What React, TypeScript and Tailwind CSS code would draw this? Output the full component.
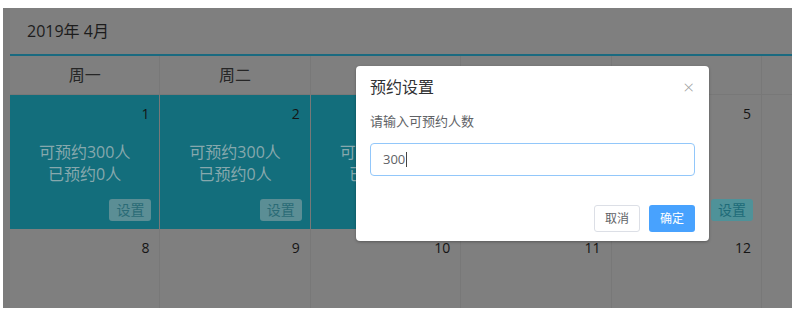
import React from "react";

const weekNames = ["周一", "周二", "周三", "周四", "周五", ""];

type Day = { n?: number; open?: boolean; btn?: "full" | "faint" };

const rows: Day[][] = [
  [
    { n: 1, open: true, btn: "full" },
    { n: 2, open: true, btn: "full" },
    { n: 3, open: true, btn: "full" },
    { n: 4, open: true, btn: "full" },
    { n: 5, btn: "faint" },
    {},
  ],
  [{ n: 8 }, { n: 9 }, { n: 10 }, { n: 11 }, { n: 12 }, {}],
];

const font = { fontFamily: '"Open Sans", "Noto Sans CJK SC", sans-serif' };

const DayCell: React.FC<{ day: Day; tall: boolean }> = ({ day, tall }) => {
  return (
    <div
      className={`relative flex flex-col border-r border-[#787878] ${
        tall ? "h-[134px]" : "h-[80px]"
      } ${day.open ? "bg-[#136e7c]" : "bg-[#7f7f7f]"}`}
    >
      <div className="text-right pr-[10px] pt-[9px] text-[14px] leading-[20px] text-[#151515]">
        {day.n}
      </div>
      {day.open && (
        <div className="mt-[17px] text-center text-[16px] leading-[22px] text-[#86a8ad]">
          <div>可预约300人</div>
          <div>已预约0人</div>
        </div>
      )}
      {day.btn && (
        <div className="mt-auto mb-[8px] mr-[8px] flex justify-end">
          <span
            className={`px-[7px] h-[22px] leading-[22px] rounded-[3px] text-[14px] ${
              day.btn === "full"
                ? "bg-[#5b8e95] text-[#2a6b76]"
                : "bg-[#4f9299] text-[#1e6b78]"
            }`}
          >
            设置
          </span>
        </div>
      )}
    </div>
  );
};

const App: React.FC = () => {
  return (
    <div className="relative w-[802px] h-[320px] bg-white overflow-hidden" style={font}>
      <div className="ml-[3px] mt-[8px] w-[789px] h-[300px] bg-[#7b7b7b] overflow-hidden">
        <div className="ml-[7px] h-full bg-[#7f7f7f]">
          <div className="h-[46px] pl-[17px] pt-[12px] text-[16px] leading-[22px] text-[#1c1c1c]">
            2019年 4月
          </div>
          <div className="h-[2px] bg-[#1a6a80]" />
          <div className="grid grid-cols-[repeat(6,150.4px)] w-[903px]">
            {weekNames.map((w, i) => (
              <div
                key={i}
                className="h-[39px] flex items-center justify-center border-r border-b border-[#787878] text-[16px] text-[#262626]"
              >
                {w}
              </div>
            ))}
            {rows.map((row, i) =>
              row.map((d, j) => <DayCell key={`${i}-${j}`} day={d} tall={i === 0} />)
            )}
          </div>
        </div>
      </div>

      {/* dialog */}
      <div className="absolute left-[356px] top-[66px] w-[353px] h-[175px] bg-white rounded-[4px] shadow-[0_1px_3px_rgba(0,0,0,0.3)] flex flex-col px-[14px]">
        <div className="flex items-center justify-between h-[42px]">
          <span className="text-[16px] text-[#303133]">预约设置</span>
          <span className="text-[19px] leading-none text-[#a0a0a0] mr-[1px] font-light">×</span>
        </div>
        <div className="mt-[3px] text-[13px] leading-[20px] text-[#606266]">请输入可预约人数</div>
        <div className="mt-[12px] h-[33px] border border-[#92c7fa] rounded-[4px] flex items-center pl-[12px] text-[13px] text-[#606266]">
          300<span className="w-px h-[15px] bg-[#444] ml-px" />
        </div>
        <div className="mt-auto mb-[9px] flex justify-end gap-[9px]">
          <button className="w-[46px] h-[27px] border border-[#dcdfe6] rounded-[3px] bg-white text-[12px] text-[#606266]">
            取消
          </button>
          <button className="w-[46px] h-[27px] rounded-[3px] bg-[#48a2fe] text-[12px] text-white">
            确定
          </button>
        </div>
      </div>
    </div>
  );
};

export default App;
